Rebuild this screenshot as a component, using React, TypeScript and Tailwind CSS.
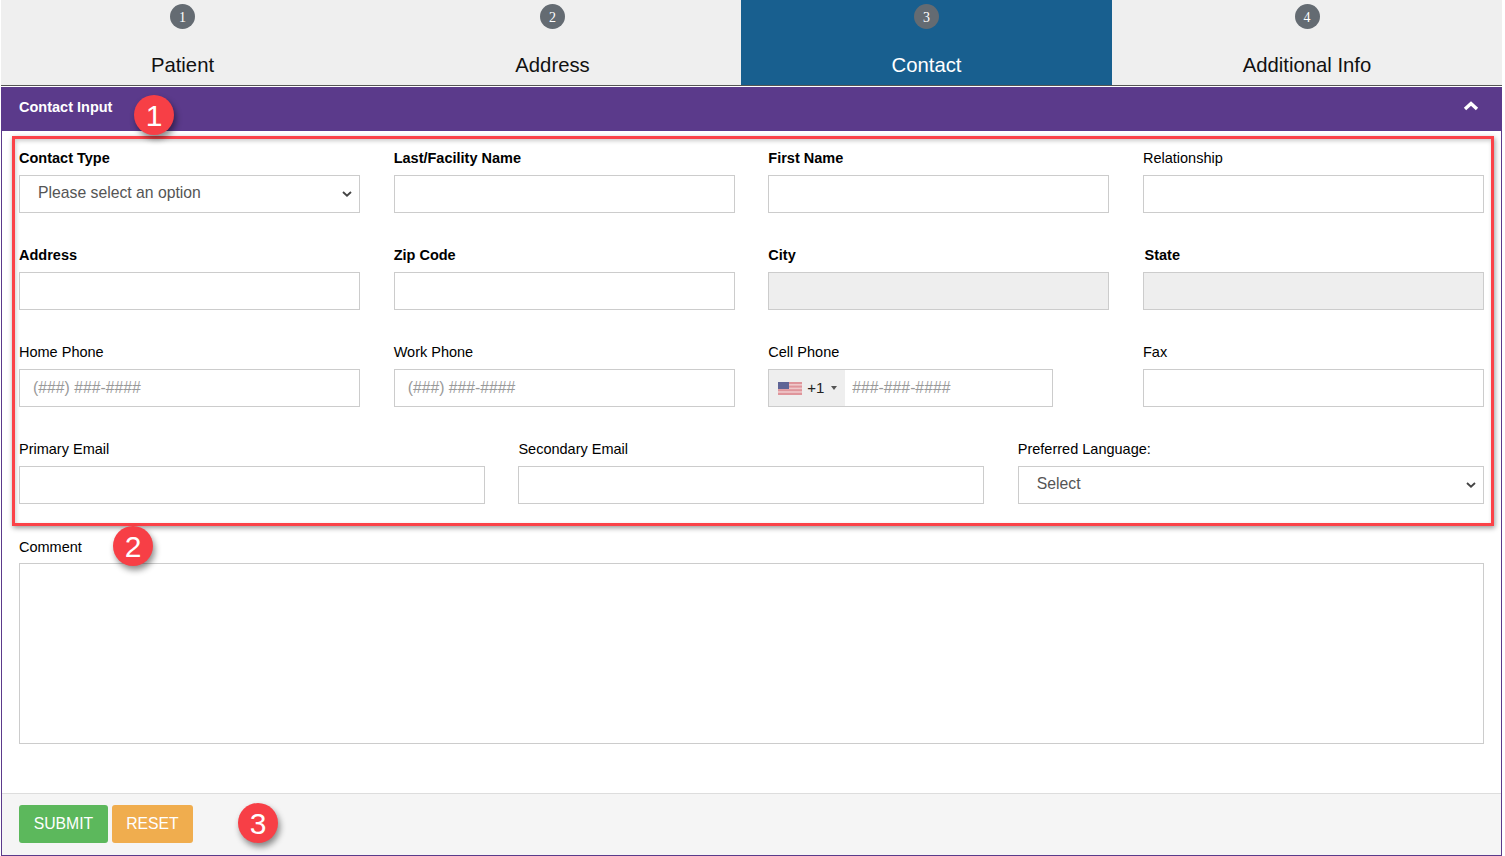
const font = { fontFamily: '"Liberation Sans", Arial, sans-serif' };

const tabs = [
  { n: 1, title: "Patient" },
  { n: 2, title: "Address" },
  { n: 3, title: "Contact", active: true },
  { n: 4, title: "Additional Info" },
];

const labelCls = "mb-[7px] block h-5 text-[14.5px] leading-5 text-black";

function Field({
  label,
  bold,
  placeholder,
  disabled,
  extra,
}: {
  label: string;
  bold?: boolean;
  placeholder?: string;
  disabled?: boolean;
  extra?: string;
}) {
  return (
    <div>
      <label className={`${labelCls} ${bold ? "font-bold" : ""} ${extra ?? ""}`}>{label}</label>
      <input
        disabled={disabled}
        placeholder={placeholder}
        className={`h-[38px] w-full border border-[#ccc] px-[13px] text-[15.75px] text-[#555] outline-none placeholder:text-[#999] ${
          disabled ? "bg-[#eee]" : "bg-white"
        }`}
      />
    </div>
  );
}

function SelectField({ label, bold, value }: { label: string; bold?: boolean; value: string }) {
  return (
    <div>
      <label className={`${labelCls} ${bold ? "font-bold" : ""}`}>{label}</label>
      <div className="relative">
        <select className="h-[38px] w-full appearance-none border border-[#ccc] bg-white pb-0.5 pl-[18px] pr-6 text-[15.75px] text-[#555] outline-none">
          <option>{value}</option>
        </select>
        <svg width="10" height="6" viewBox="0 0 10 6" fill="none" className="pointer-events-none absolute right-2 top-4">
          <path d="M1 1 L5 4.6 L9 1" stroke="#444" strokeWidth="1.9" />
        </svg>
      </div>
    </div>
  );
}

function Marker({ n, className }: { n: number; className: string }) {
  return (
    <div
      className={`absolute flex h-10 w-10 items-center justify-center rounded-full bg-[#f73f46] text-[30px] text-white shadow-[2px_4px_6px_rgba(0,0,0,0.45)] ${className}`}
    >
      {n}
    </div>
  );
}

function UsFlag() {
  return (
    <svg width="24" height="13" viewBox="0 0 24 13" className="shrink-0">
      <rect width="24" height="13" fill="#df959b" />
      <rect y="2" width="24" height="1.6" fill="#efc9cb" />
      <rect y="5.6" width="24" height="1.6" fill="#efc9cb" />
      <rect y="9.2" width="24" height="1.6" fill="#efc9cb" />
      <rect width="11" height="7" fill="#5f6596" />
    </svg>
  );
}

export default function App() {
  return (
    <div className="relative h-[856px] w-[1502px] overflow-hidden bg-white pl-px" style={font}>
      <div className="grid h-[86px] grid-cols-[363px_377px_371px_390px] border-b border-[#555] bg-[#efefef]">
        {tabs.map((t) => (
          <div
            key={t.n}
            className={`flex flex-col items-center pt-1 ${t.active ? "h-[85px] bg-[#185f8f] text-white" : "text-[#111]"}`}
          >
            <div
              className="flex h-[25px] w-[25px] items-center justify-center rounded-full bg-[#646b72] pt-0.5 text-sm text-white"
              style={{ fontFamily: '"Liberation Serif", serif' }}
            >
              {t.n}
            </div>
            <div className="mt-[21px] text-[20.3px] leading-[30px]">{t.title}</div>
          </div>
        ))}
      </div>

      <div className="mt-px flex h-[769px] flex-col border-x border-b border-[#5b3a8b]">
        <div className="flex h-11 items-center justify-between bg-[#5b3a8b] pb-0.5 pl-[17px] pr-[22px]">
          <h2 className="text-[14.5px] font-bold text-white">Contact Input</h2>
          <svg width="16" height="10" viewBox="0 0 16 10" fill="none" className="mb-1">
            <path d="M2 8 L8 2.5 L14 8" stroke="#fff" strokeWidth="3.4" />
          </svg>
        </div>

        <div className="flex-1 px-[17px] pt-[17px]">
          <div className="grid grid-cols-4 gap-x-[33.67px] gap-y-8">
            <SelectField label="Contact Type" bold value="Please select an option" />
            <Field label="Last/Facility Name" bold />
            <Field label="First Name" bold />
            <Field label="Relationship" />

            <Field label="Address" bold />
            <Field label="Zip Code" bold />
            <Field label="City" bold disabled />
            <Field label="State" bold disabled extra="pl-[1.5px]" />

            <Field label="Home Phone" placeholder="(###) ###-####" />
            <Field label="Work Phone" placeholder="(###) ###-####" />
            <div>
              <label className={labelCls}>Cell Phone</label>
              <div className="flex h-[38px] w-[285px] border border-[#ccc] bg-white">
                <div className="flex w-[76px] items-center bg-[#eee] pl-[9px]">
                  <UsFlag />
                  <span className="ml-[5px] text-[15px] text-[#222]">+1</span>
                  <span className="ml-[7px] h-0 w-0 border-x-[3.5px] border-t-4 border-x-transparent border-t-[#555]" />
                </div>
                <input
                  placeholder="###-###-####"
                  className="min-w-0 flex-1 pl-[7px] text-[15.75px] outline-none placeholder:text-[#999]"
                />
              </div>
            </div>
            <Field label="Fax" />
          </div>

          <div className="mt-8 grid grid-cols-[repeat(3,466px)] gap-x-[33.4px]">
            <Field label="Primary Email" />
            <Field label="Secondary Email" />
            <SelectField label="Preferred Language:" value="Select" />
          </div>

          <div className="mt-[33px]">
            <label className="mb-[6px] block h-5 text-[14.5px] leading-5 text-black">Comment</label>
            <textarea className="block h-[181px] w-full resize-none border border-[#ccc] bg-white outline-none" />
          </div>
        </div>

        <div className="flex h-[62px] items-start gap-1 border-t border-[#ddd] bg-[#f5f5f5] pl-[17px] pt-[11px]">
          <button className="h-[38px] w-[89px] rounded-[3px] bg-[#5cb85c] text-[15.75px] text-white">SUBMIT</button>
          <button className="h-[38px] w-[81px] rounded-[3px] bg-[#f0ad4e] text-[15.75px] text-white">RESET</button>
        </div>
      </div>

      <div className="pointer-events-none absolute left-3 top-[136px] h-[390px] w-[1482px] border-[3px] border-[#fb4248] shadow-[1px_2px_5px_rgba(0,0,0,0.4),inset_1px_2px_4px_rgba(0,0,0,0.2)]" />
      <Marker n={1} className="left-[134px] top-[95px]" />
      <Marker n={2} className="left-[113px] top-[526px]" />
      <Marker n={3} className="left-[238px] top-[803px]" />
    </div>
  );
}
